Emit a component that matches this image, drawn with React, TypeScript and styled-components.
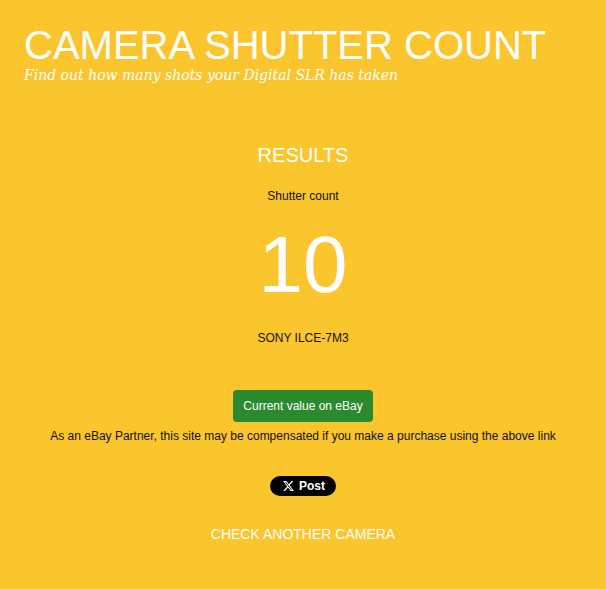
import React from 'react';
import styled, { createGlobalStyle } from 'styled-components';

const GlobalStyle = createGlobalStyle`
  html, body {
    margin: 0;
    padding: 0;
    background: #fbc52d;
  }
  body {
    font-family: "Liberation Sans", Arial, sans-serif;
    color: #111;
  }
`;

const Page = styled.div`
  min-height: 589px;
  background: #fbc52d;
  padding: 22px 24px 0;
  box-sizing: border-box;
`;

const Header = styled.header`
  display: flex;
  flex-direction: column;
`;

const Title = styled.h1`
  margin: 0;
  font-family: "Liberation Sans", Arial, sans-serif;
  font-weight: normal;
  font-size: 40px;
  line-height: 46px;
  color: #fff;
`;

const Tagline = styled.p`
  margin: -2px 0 0;
  font-family: "DejaVu Serif", Georgia, serif;
  font-style: italic;
  font-size: 14px;
  line-height: 18px;
  color: #fff;
`;

const Results = styled.section`
  display: flex;
  flex-direction: column;
  align-items: center;
  margin-top: 59px;
  text-align: center;
`;

const Heading = styled.h2`
  margin: 0;
  font-weight: normal;
  font-size: 20px;
  line-height: 24px;
  color: #fff;
`;

const Label = styled.div<{ $gap?: number }>`
  margin-top: ${(p) => p.$gap ?? 0}px;
  font-size: 12px;
  line-height: 16px;
  color: #111;
`;

const Count = styled.div`
  margin-top: 18px;
  font-size: 80px;
  line-height: 86px;
  color: #fff;
`;

const EbayButton = styled.a`
  display: inline-flex;
  align-items: center;
  justify-content: center;
  margin-top: 44px;
  height: 32px;
  padding: 0 10px;
  border-radius: 4px;
  background: #2b8a2f;
  color: #fff;
  font-size: 12px;
  text-decoration: none;
`;

const PostButton = styled.a`
  display: inline-flex;
  align-items: center;
  gap: 5px;
  margin-top: 32px;
  height: 20px;
  padding: 0 11px 0 13px;
  border-radius: 10px;
  background: #000;
  color: #fff;
  font-size: 12px;
  font-weight: bold;
  text-decoration: none;
`;

const CheckAgain = styled.a`
  margin-top: 29px;
  font-size: 14px;
  line-height: 18px;
  color: #fff;
  text-decoration: none;
`;

const XLogo = () => (
  <svg width="11" height="10" viewBox="0 0 24 22" aria-hidden="true">
    <path
      fill="#fff"
      d="M18.9 0h3.7l-8 9.2L24 22h-7.4l-5.8-7.6L4.2 22H.5l8.6-9.8L0 0h7.6l5.2 6.9L18.9 0zm-1.3 19.8h2L6.5 2.1H4.3l13.3 17.7z"
    />
  </svg>
);

const App = () => {
  return (
    <>
      <GlobalStyle />
      <Page>
        <Header>
          <Title>CAMERA SHUTTER COUNT</Title>
          <Tagline>Find out how many shots your Digital SLR has taken</Tagline>
        </Header>
        <Results>
          <Heading>RESULTS</Heading>
          <Label $gap={21}>Shutter count</Label>
          <Count>10</Count>
          <Label $gap={22}>SONY ILCE-7M3</Label>
          <EbayButton href="#">Current value on eBay</EbayButton>
          <Label $gap={6}>
            As an eBay Partner, this site may be compensated if you make a purchase using the above link
          </Label>
          <PostButton href="#">
            <XLogo />
            Post
          </PostButton>
          <CheckAgain href="#">CHECK ANOTHER CAMERA</CheckAgain>
        </Results>
      </Page>
    </>
  );
};

export default App;
